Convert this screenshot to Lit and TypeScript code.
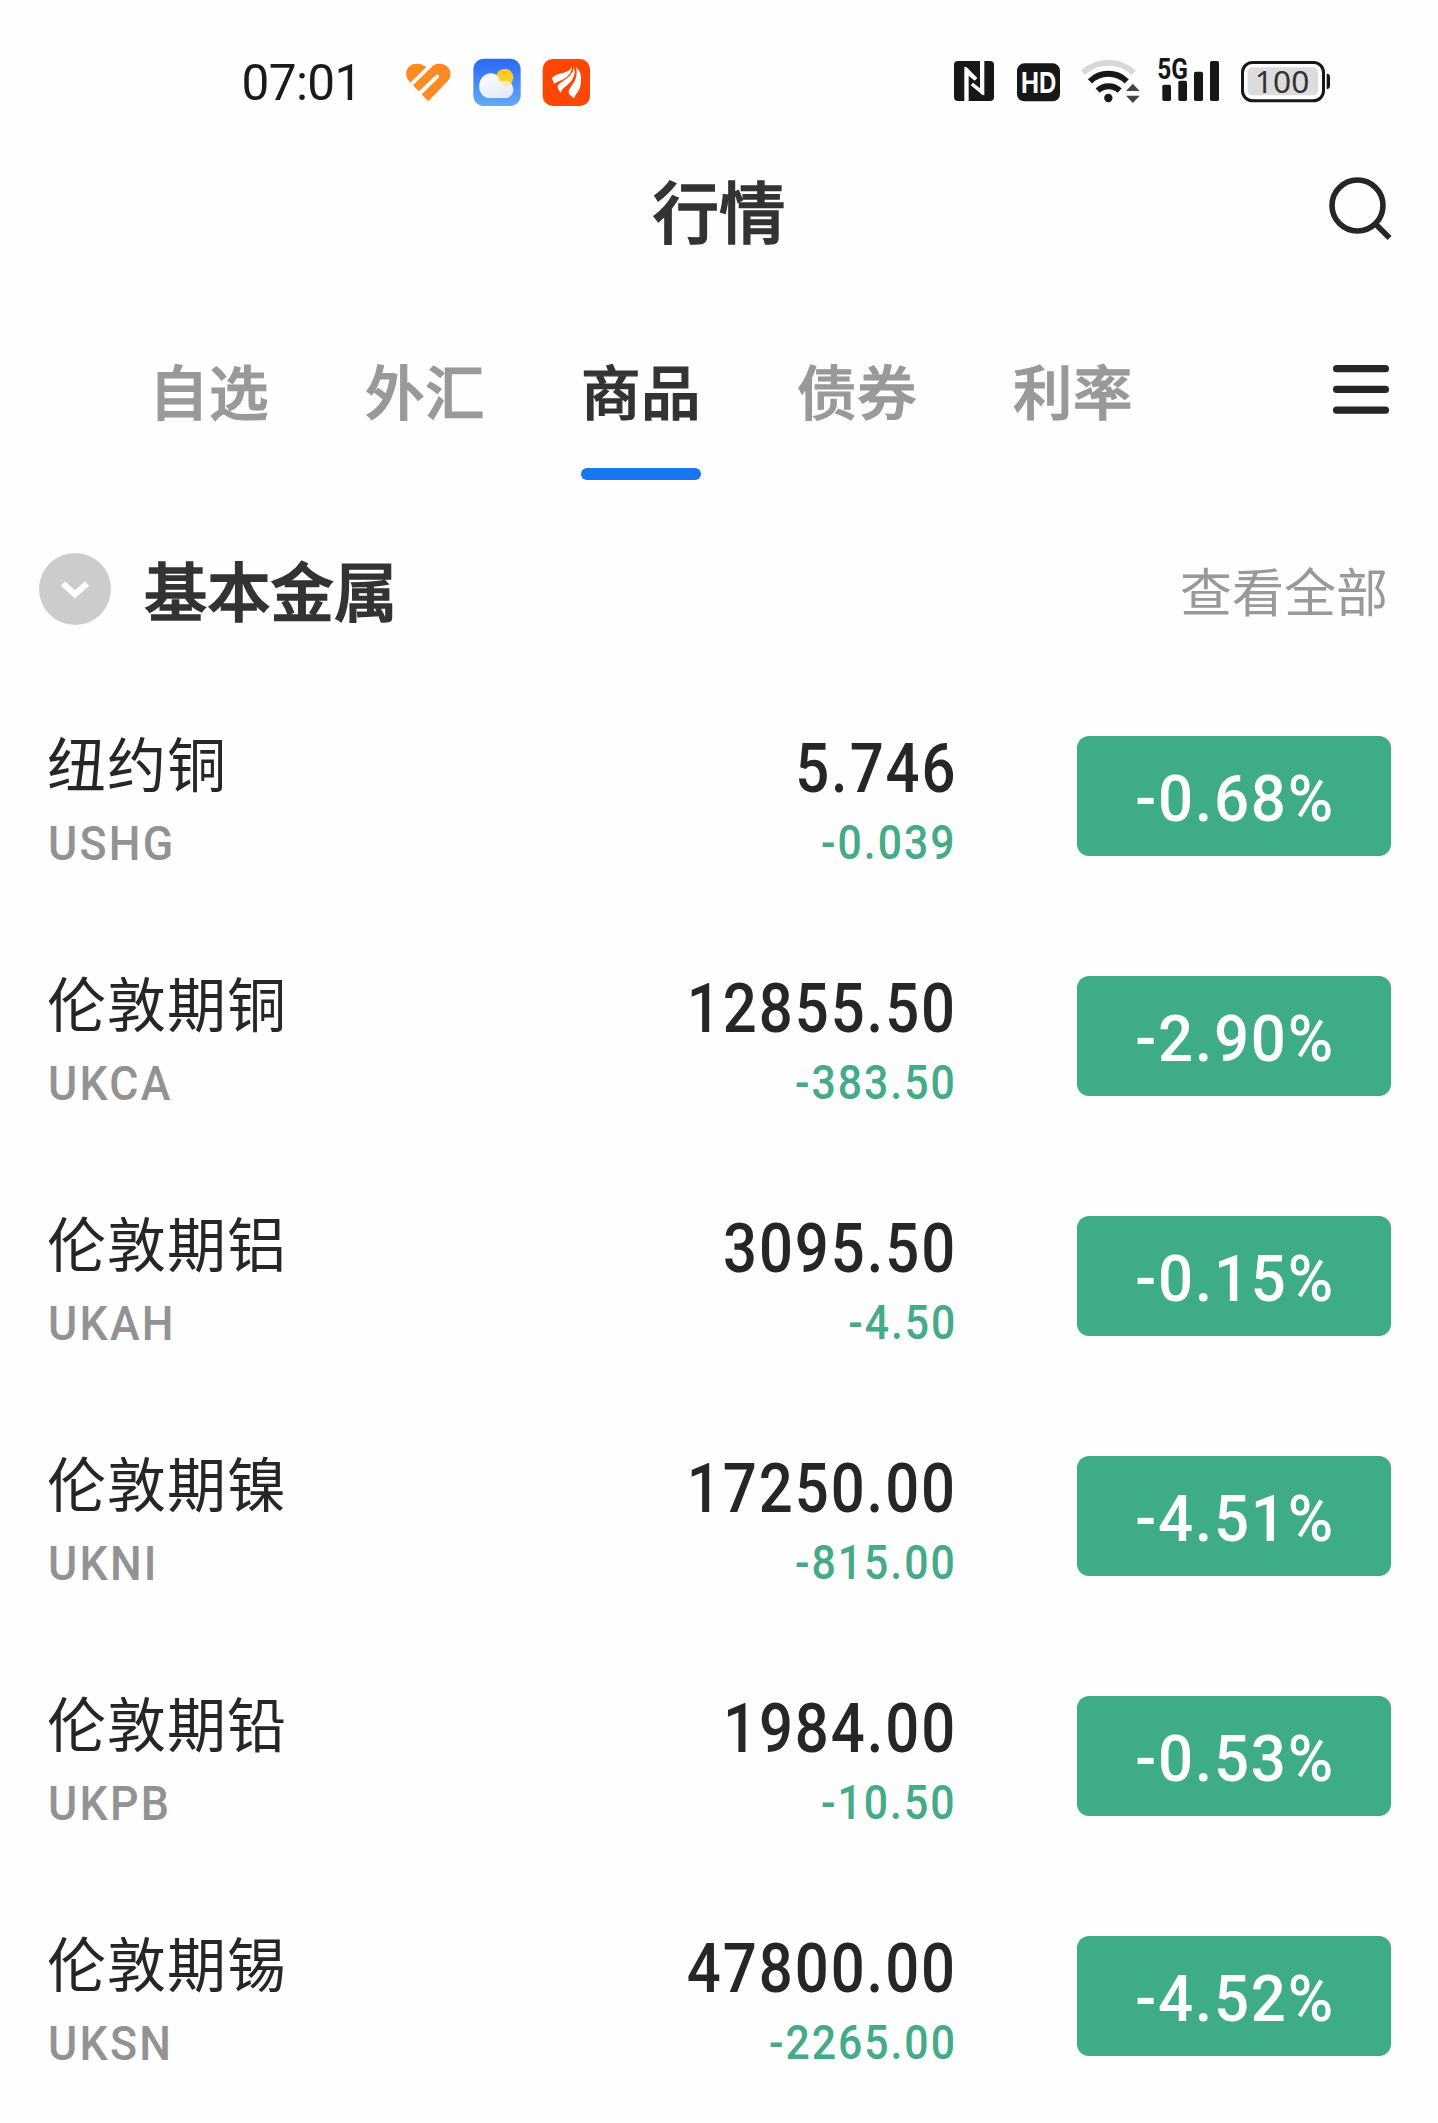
import { LitElement, html, css, svg } from "lit";
import { customElement, property } from "lit/decorators.js";

interface Quote {
  name: string;
  code: string;
  price: string;
  change: string;
  percent: string;
}

const QUOTES: Quote[] = [
  { name: "纽约铜", code: "USHG", price: "5.746", change: "-0.039", percent: "-0.68%" },
  { name: "伦敦期铜", code: "UKCA", price: "12855.50", change: "-383.50", percent: "-2.90%" },
  { name: "伦敦期铝", code: "UKAH", price: "3095.50", change: "-4.50", percent: "-0.15%" },
  { name: "伦敦期镍", code: "UKNI", price: "17250.00", change: "-815.00", percent: "-4.51%" },
  { name: "伦敦期铅", code: "UKPB", price: "1984.00", change: "-10.50", percent: "-0.53%" },
  { name: "伦敦期锡", code: "UKSN", price: "47800.00", change: "-2265.00", percent: "-4.52%" },
];

const TABS = ["自选", "外汇", "商品", "债券", "利率"];
const ACTIVE_TAB = "商品";

@customElement("status-bar")
class StatusBar extends LitElement {
  static styles = css`
    :host {
      display: flex;
      align-items: center;
      justify-content: space-between;
      height: 162px;
      padding: 0 108px 0 241px;
      box-sizing: border-box;
    }
    .group {
      display: flex;
      align-items: center;
    }
    .time {
      font: 400 49.500px/60px Roboto, sans-serif;
      letter-spacing: -0.600px;
      width: 164.500px;
      padding-left: 0.500px;
      color: #1a1a1a;
      padding-top: 3px;
    }
    svg {
      display: block;
      height: 48px;
      flex: none;
      overflow: visible;
    }
    .heart { width: 45px; margin-right: 22px; }
    .weather { width: 48px; margin-right: 21px; }
    .stock { width: 48px; }
    .nfc { width: 40px; margin-right: 22.7px; }
    .hd { width: 43px; margin-right: 21px; }
    .wifi { width: 59px; margin-right: 18.3px; }
    .signal { width: 61px; margin-right: 22px; }
    .battery { width: 89px; }
    .bold { font: 700 88px Roboto, sans-serif; }
    .hd-text { font: 700 86px Inter, sans-serif; }
    .level { font: 400 95px "Noto Sans", sans-serif; }
  `;

  render() {
    return html`
      <div class="group">
        <span class="time">07:01</span>
        <svg class="heart" viewBox="558 51 135 144">
          <path fill="#ff8a23" d="M625 184L568 124C550 104 558 72 590 71C606 71 616 77 625 86C634 77 645 71 660 71C692 73 701 106 682 124Z" />
          <path stroke="#fff" stroke-width="11" fill="none" d="M566 141L634 74" />
          <path stroke="#fff" stroke-width="12" fill="none" d="M594 165L651 110" stroke-linecap="round" />
        </svg>
        <svg class="weather" viewBox="760 51 144 144">
          <defs>
            <linearGradient id="sky" x1="0" y1="0" x2="0" y2="1">
              <stop offset="0" stop-color="#2b68f8" />
              <stop offset="1" stop-color="#63abf8" />
            </linearGradient>
            <linearGradient id="cloud" x1="0" y1="0" x2="0.6" y2="1">
              <stop offset="0" stop-color="#fff" />
              <stop offset="1" stop-color="#e3ecfb" />
            </linearGradient>
            <linearGradient id="sun" x1="0" y1="0" x2="0" y2="1">
              <stop offset="0" stop-color="#fdc51c" />
              <stop offset="1" stop-color="#fbd435" />
            </linearGradient>
          </defs>
          <rect x="761" y="56" width="142" height="142" rx="32" fill="url(#sky)" />
          <circle cx="855" cy="112" r="26" fill="url(#sun)" />
          <path fill="url(#cloud)" d="M810 174C770 172 770 116 800 103C818 94 838 104 842 124C866 116 882 132 881 150C880 166 868 174 856 174Z" />
          <path fill="#fdeaa8" d="M831 109C838 116 840 121 842 126C854 120 868 124 877 132C866 142 838 144 831 109Z" opacity=".85" />
        </svg>
        <svg class="stock" viewBox="966 51 144 144">
          <rect x="968" y="57" width="142" height="141" rx="30" fill="#fe4703" />
          <g fill="#fff">
            <path d="M1056 79C1056 92 1052 100 1041 110C1030 120 1014 123 1002 131C1000 124 997 120 996 114C1004 104 1018 101 1032 98C1046 94 1052 90 1056 79Z" />
            <path d="M1061 81C1067 96 1064 108 1054 122C1044 136 1028 142 1021 158C1017 150 1012 144 1013 138C1018 128 1032 124 1044 112C1056 101 1061 94 1061 81Z" />
            <path d="M1068 82C1084 94 1086 116 1081 138C1077 156 1066 162 1062 175C1054 168 1046 164 1046 156C1048 144 1060 134 1066 118C1071 104 1071 94 1068 82Z" />
          </g>
        </svg>
      </div>
      <div class="group">
        <svg class="nfc" viewBox="72 51 120 144">
          <rect x="72" y="63" width="120" height="120" rx="12" fill="#171717" />
          <path d="M103 184V80C110 80 114 84 118 90L142 114L134 122L116 107V184Z" fill="#fff" />
          <path d="M150 62H163V166C157 166 153 162 148 157L122 136L129 128L150 145Z" fill="#fff" />
        </svg>
        <svg class="hd" viewBox="260 51 129 144">
          <rect x="260" y="70" width="129" height="114" rx="22" fill="#171717" />
          <text class="hd-text" x="272" y="159" fill="#fff" textLength="106" lengthAdjust="spacingAndGlyphs">HD</text>
        </svg>
        <svg class="wifi" viewBox="452 51 177 144">
          <g fill="none" stroke="#171717" stroke-width="18">
            <path stroke="#d8d8d8" d="M458 98A112 112 0 0 1 610 98" />
            <path d="M479 124A78 78 0 0 1 589 124" />
            <path d="M502 152A48 48 0 0 1 568 152" />
          </g>
          <circle cx="534" cy="174" r="12.5" fill="#171717" />
          <path fill="#444" d="M587 153L607.500 131L628 153ZM587 167H628L607.500 189Z" />
        </svg>
        <svg class="signal" viewBox="684 51 183 144">
          <g fill="#171717">
            <rect x="697" y="134" width="26" height="49" rx="5" />
            <rect x="745" y="122" width="26" height="61" rx="5" />
            <rect x="792" y="95" width="27" height="88" rx="5" />
            <rect x="840" y="63" width="27" height="120" rx="5" />
          </g>
          <text class="bold" x="682" y="117" fill="#171717" textLength="92" lengthAdjust="spacingAndGlyphs">5G</text>
        </svg>
        <svg class="battery" viewBox="933 51 267 144">
          <rect x="937.500" y="67.500" width="243" height="115" rx="30" fill="#fff" stroke="#171717" stroke-width="9" />
          <rect x="953" y="82" width="211" height="84" rx="14" fill="#dcdcdc" />
          <path d="M1190 101H1193Q1200 103 1200 110V138Q1200 145 1193 147H1190Z" fill="#171717" />
          <text class="level" x="974" y="160" fill="#333" textLength="164">100</text>
        </svg>
      </div>
    `;
  }
}

@customElement("page-header")
class PageHeader extends LitElement {
  static styles = css`
    :host {
      display: grid;
      grid-template-columns: 1fr auto 1fr;
      align-items: center;
      height: 101px;
      padding: 0 44px;
      box-sizing: border-box;
    }
    .title {
      grid-column: 2;
      margin: 0;
      font-weight: 500;
      -webkit-text-stroke: 1.300px #333;
      font-size: 66.500px;
      line-height: 80px;
      padding-bottom: 8px;
      color: #333;
    }
    svg {
      display: block;
      width: 66px;
      height: 66px;
      justify-self: end;
      margin-bottom: 6px;
    }
  `;

  render() {
    return html`
      <h1 class="title">行情</h1>
      <svg viewBox="0 0 66 66" fill="none" stroke="#262626" stroke-width="5.600">
        <circle cx="29.500" cy="28.500" r="25.500" />
        <path d="M47 46.500L61.500 61" />
      </svg>
    `;
  }
}

@customElement("market-tabs")
class MarketTabs extends LitElement {
  static styles = css`
    :host {
      display: flex;
      justify-content: space-between;
      height: 217px;
      padding: 80px 49px 0 149px;
      box-sizing: border-box;
    }
    .tabs {
      display: flex;
      gap: 96px;
    }
    .tab {
      width: 120px;
      height: 137px;
      box-sizing: border-box;
      font-weight: 500;
      -webkit-text-stroke: 1.200px currentColor;
      font-size: 59.500px;
      letter-spacing: 0.500px;
      line-height: 93px;
      color: #999;
      display: flex;
      flex-direction: column;
      justify-content: space-between;
    }
    .tab.active {
      color: #333;
    }
    .tab.active::after {
      content: "";
      height: 12px;
      border-radius: 6px;
      background: #1677f0;
    }
    svg {
      display: block;
      width: 56px;
      height: 50px;
      margin-top: 22px;
    }
  `;

  render() {
    return html`
      <nav class="tabs">
        ${TABS.map((t) => html`<span class="tab ${t === ACTIVE_TAB ? "active" : ""}">${t}</span>`)}
      </nav>
      <svg viewBox="0 0 56 50" fill="#262626">
        ${[0, 20.8, 41.6].map((y) => svg`<rect x="0" y=${y} width="56" height="7.200" rx="3.500" />`)}
      </svg>
    `;
  }
}

@customElement("section-head")
class SectionHead extends LitElement {
  @property() heading = "";

  static styles = css`
    :host {
      display: flex;
      align-items: center;
      height: 218px;
      padding: 0 50px 0 39px;
      box-sizing: border-box;
    }
    svg {
      display: block;
      width: 72px;
      height: 72px;
      margin-right: 33px;
    }
    .heading {
      margin: 0;
      flex: 1;
      font-weight: 500;
      -webkit-text-stroke: 1.500px #333;
      font-size: 63.300px;
      line-height: 80px;
      color: #333;
    }
    .more {
      font-size: 52px;
      line-height: 80px;
      padding-top: 2px;
      color: #999;
    }
  `;

  render() {
    return html`
      <svg viewBox="0 0 72 72">
        <circle cx="36" cy="36" r="36" fill="#ccc" />
        <path d="M24 30.500L36 41.500L48 30.500" fill="none" stroke="#fff" stroke-width="6" />
      </svg>
      <h2 class="heading">${this.heading}</h2>
      <span class="more">查看全部</span>
    `;
  }
}

@customElement("quote-row")
class QuoteRow extends LitElement {
  @property({ attribute: false }) quote!: Quote;

  static styles = css`
    :host {
      display: grid;
      grid-template-columns: 1fr auto 314px;
      align-items: start;
      height: 240px;
      padding: 23px 47px 0 47px;
      box-sizing: border-box;
    }
    .label,
    .value {
      display: flex;
      flex-direction: column;
      align-items: flex-start;
    }
    .label {
      padding-top: 1px;
    }
    .value {
      align-items: flex-end;
      padding-top: 8px;
      margin-right: 120px;
      font-family: Roboto, sans-serif;
      font-weight: 500;
    }
    .name {
      font-size: 59px;
      letter-spacing: 1px;
      line-height: 80px;
      color: #262626;
    }
    .code {
      font: 500 47.500px/60px Roboto, sans-serif;
      letter-spacing: 2.400px;
      margin: 12px 0 0 1px;
      color: #929292;
      transform: scaleX(0.94);
      transform-origin: left;
    }
    .price {
      font-size: 68px;
      line-height: 80px;
      letter-spacing: 2.200px;
      color: #262626;
      transform: scaleX(0.88);
      transform-origin: right;
    }
    .change {
      font-size: 47.500px;
      line-height: 60px;
      letter-spacing: 2.200px;
      margin-top: 4px;
      color: #45aa87;
      transform: scaleX(0.9);
      transform-origin: right;
    }
    .badge {
      height: 120px;
      margin-top: 15px;
      border-radius: 12px;
      background: #3eac87;
      display: flex;
      align-items: center;
      justify-content: center;
      color: #fff;
      font: 500 65px/80px Roboto, sans-serif;
    }
    .percent {
      letter-spacing: 1.900px;
      margin-right: -2px;
      padding-top: 6px;
      transform: scaleX(0.95);
    }
  `;

  render() {
    const q = this.quote;
    return html`
      <div class="label">
        <span class="name">${q.name}</span>
        <span class="code">${q.code}</span>
      </div>
      <div class="value">
        <span class="price">${q.price}</span>
        <span class="change">${q.change}</span>
      </div>
      <div class="badge"><span class="percent">${q.percent}</span></div>
    `;
  }
}

@customElement("app-root")
class AppRoot extends LitElement {
  static styles = css`
    :host {
      display: block;
      width: 1438px;
      height: 2123px;
      overflow: hidden;
      background: #fefefe;
      font-family: "Noto Sans CJK SC", sans-serif;
    }
  `;

  render() {
    return html`
      <status-bar></status-bar>
      <page-header></page-header>
      <market-tabs></market-tabs>
      <section-head heading="基本金属"></section-head>
      <main>${QUOTES.map((q) => html`<quote-row .quote=${q}></quote-row>`)}</main>
    `;
  }
}
